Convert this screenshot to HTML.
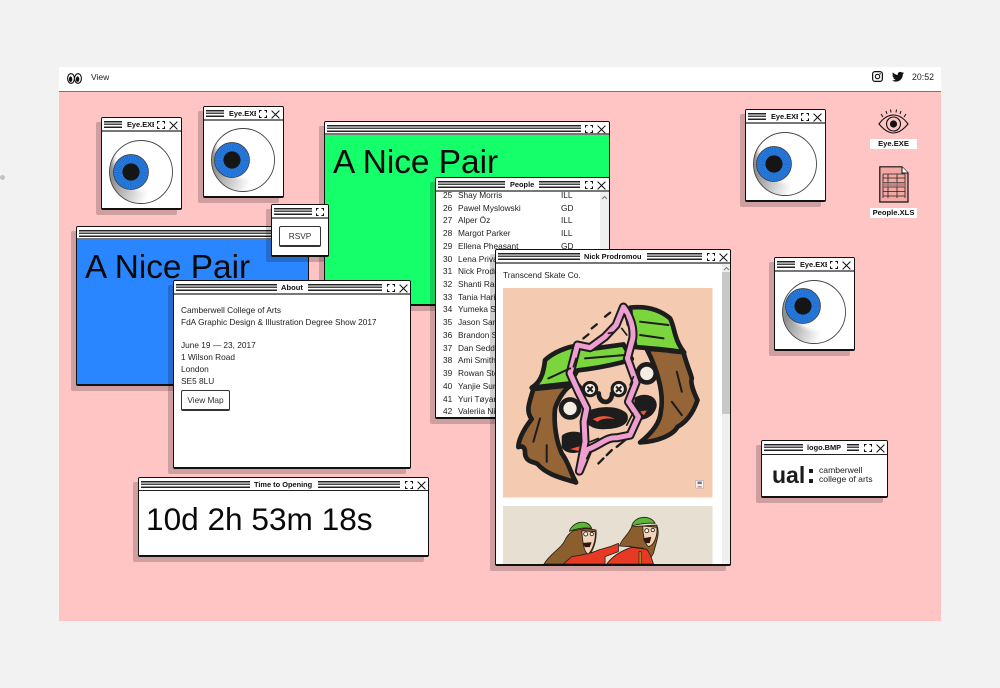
<!DOCTYPE html>
<html><head><meta charset="utf-8">
<style>
html,body{margin:0;padding:0;width:1000px;height:688px;overflow:hidden;background:#f2f2f2;font-family:"Liberation Sans",sans-serif;color:#111}
#dot{position:absolute;left:0;top:175px;width:5px;height:5px;border-radius:50%;background:#c4c4c4}
#screen{position:absolute;left:59px;top:67px;width:882px;height:554px;background:#ffc4c4;overflow:hidden}
#menu{position:absolute;left:0;top:0;width:882px;height:24px;background:#fff;border-bottom:1px solid #777}
.abs,.w,.l,.t,.fs,.x,.c{position:absolute}
.m{position:absolute;font-size:8.5px;top:5px;line-height:11px;color:#222}
.w{background:#fff;border:1px solid #111;border-bottom-width:2px;border-radius:2px;box-shadow:-5px 5px 0 rgba(0,0,0,.19);box-sizing:border-box;overflow:hidden;isolation:isolate}
.b{position:absolute;left:0;right:0;top:0;height:14px;background:#fff;border-bottom:2px solid #777;box-sizing:border-box;z-index:5}
.l{top:3px;height:7px;background:linear-gradient(#222 0,#222 1.5px,#fff 1.5px,#fff 2.7px,#444 2.7px,#444 4.2px,#fff 4.2px,#fff 5.4px,#222 5.4px,#222 7px)}
.t{top:1px;font-size:7.4px;font-weight:bold;line-height:12px;white-space:nowrap;overflow:hidden;color:#111}
.fs{top:3px;width:8px;height:8px}
.x{top:2.5px;width:9px;height:9px}
.c{left:0;right:0;top:14px;bottom:0}
.big{position:absolute;font-size:33.4px;line-height:38px;white-space:nowrap;color:#0a0a0a}
.txt{position:absolute;font-size:8.3px;line-height:11.8px;white-space:nowrap;color:#222}
.btn{position:absolute;background:#fff;border:1px solid #333;border-right-width:1.5px;border-bottom-width:2px;border-radius:2px;box-sizing:border-box;font-size:8.3px;text-align:center;color:#333}
.row{position:absolute;font-size:8.3px;line-height:12px;white-space:nowrap;color:#222}
.lab{position:absolute;background:#fff;font-size:7.6px;font-weight:bold;line-height:10px;height:10px;text-align:center;color:#111;white-space:nowrap}
svg{display:block;overflow:visible}
</style></head>
<body>
<svg width="0" height="0" style="position:absolute">
<defs>
<symbol id="ifs" viewBox="0 0 8 8"><path d="M.5 2.6V.5H2.6M5.4.5H7.5V2.6M7.500 5.400V7.500H5.400M2.600 7.500H.5V5.400" fill="none" stroke="#111" stroke-width="1.1"/></symbol>
<symbol id="ix" viewBox="0 0 9 9"><path d="M.6.6 8.4 8.4M8.4.6.6 8.4" fill="none" stroke="#111" stroke-width="1"/></symbol>
<linearGradient id="sh" x1=".05" y1=".6" x2=".62" y2=".85"><stop offset="0" stop-color="#8f8f8f"/><stop offset="1" stop-color="#fff"/></linearGradient>
<clipPath id="bc"><circle cx="32" cy="32" r="31.500"/></clipPath>
<filter id="bl" x="-20%" y="-20%" width="140%" height="140%"><feGaussianBlur stdDeviation="2"/></filter>
<symbol id="ball" viewBox="0 0 64 64" overflow="visible">
<circle cx="32" cy="32" r="31.500" fill="url(#sh)"/>
<g clip-path="url(#bc)"><circle cx="40" cy="16" r="36" fill="#fff" filter="url(#bl)"/></g>
<circle cx="32" cy="32" r="31.500" fill="none" stroke="#444" stroke-width=".9"/>
</symbol>
<symbol id="iris" viewBox="0 0 36 36">
<circle cx="18" cy="18" r="17.500" fill="#2a7de1" stroke="#333" stroke-width=".7"/>
<circle cx="18" cy="18" r="13" fill="none" stroke="#1a62bd" stroke-width="8" stroke-dasharray=".5 1.1"/>
<circle cx="18" cy="18" r="8.600" fill="#151515"/>
</symbol>
</defs>
</svg>
<div id="dot"></div>
<div id="screen">
<div id="menu">
<svg style="position:absolute;left:8px;top:6px" width="15" height="11" viewBox="0 0 15 11"><ellipse cx="4" cy="5.500" rx="3.400" ry="4.800" fill="#fff" stroke="#111" stroke-width="1.100"/><ellipse cx="11" cy="5.500" rx="3.400" ry="4.800" fill="#fff" stroke="#111" stroke-width="1.100"/><ellipse cx="3.600" cy="6.200" rx="1.700" ry="2.800" fill="#111"/><ellipse cx="10.600" cy="6.200" rx="1.700" ry="2.800" fill="#111"/></svg>
<div class="m" style="left:32px">View</div>
<svg style="position:absolute;left:813px;top:4px" width="11" height="11" viewBox="0 0 11 11"><rect x=".6" y=".6" width="9.800" height="9.800" rx="2.400" fill="none" stroke="#111" stroke-width="1.200"/><circle cx="5.500" cy="5.500" r="2.200" fill="none" stroke="#111" stroke-width="1.100"/><circle cx="8.200" cy="2.800" r=".7" fill="#111"/></svg>
<svg style="position:absolute;left:833px;top:5px" width="12" height="10" viewBox="0 0 24 20"><path transform="translate(0,-2.5)" d="M23.95 4.57a10 10 0 0 1-2.82.77 4.96 4.96 0 0 0 2.16-2.72c-.95.55-2 .96-3.12 1.18a4.92 4.92 0 0 0-8.38 4.48C7.69 8.1 4.07 6.13 1.64 3.16a4.82 4.82 0 0 0-.66 2.47c0 1.71.87 3.21 2.19 4.1a4.9 4.9 0 0 1-2.23-.61v.06c0 2.38 1.7 4.37 3.95 4.83a5 5 0 0 1-2.21.08 4.94 4.94 0 0 0 4.6 3.42 9.87 9.87 0 0 1-6.1 2.1c-.39 0-.78-.02-1.17-.07a14 14 0 0 0 7.56 2.21c9.05 0 14-7.5 14-13.98 0-.21 0-.42-.02-.63.96-.69 1.8-1.56 2.46-2.54z" fill="#111"/></svg>
<div class="m" style="left:853px;font-size:8.800px">20:52</div>
</div>

<!-- desktop icons -->
<svg style="position:absolute;left:819px;top:41px" width="31" height="26" viewBox="0 0 31 26"><path d="M1 16C6 9 11 7 15.500 7S25 9 30 16C25 22 20 25 15.500 25S6 22 1 16Z" fill="none" stroke="#111" stroke-width="1.100"/><circle cx="15.500" cy="16" r="7" fill="none" stroke="#111" stroke-width="1.100"/><circle cx="15.500" cy="16" r="3.600" fill="#111"/><path d="M5 9 3 6M9 6 8 3M13 4.500 12.500 1.500M18 4.500 18.500 1.500M22 6 23 3M26 9 28 6" stroke="#111" stroke-width="1" fill="none"/></svg>
<div class="lab" style="left:811px;top:72px;width:47px">Eye.EXE</div>
<svg style="position:absolute;left:820px;top:99px" width="30" height="37" viewBox="0 0 30 37"><path d="M.8.8H23L29 7V36H.8Z" fill="#f3a9a3" stroke="#111" stroke-width="1.200"/><path d="M23 .8V7H29" fill="#fff" stroke="#111"/><path d="M4 8H26M4 12H26M4 16.500H26M4 21H26M4 25.500H26M4 30H26M4 8V32M26 8V32M9 8V32M18 8V32" fill="none" stroke="#222" stroke-width=".8"/><path d="M4 16.500H26V21H4Z" fill="#a77" opacity=".7"/></svg>
<div class="lab" style="left:811px;top:141px;width:47px">People.XLS</div>

<!-- Blue -->
<div class="w" style="left:17px;top:159px;width:233px;height:160px;background:#2a86ff">
 <div class="b" style="height:13px"><div class="l" style="left:2px;width:200px"></div></div>
 <div class="big" style="left:8px;top:22px">A Nice Pair</div>
</div>
<!-- Green -->
<div class="w" style="left:265px;top:54px;width:286px;height:185px;background:#14ff6a">
 <div class="b" style="height:13px"><div class="l" style="left:2px;width:254px"></div>
  <svg class="fs" style="left:260px"><use href="#ifs" width="8" height="8"/></svg><svg class="x" style="left:272px"><use href="#ix" width="9" height="9"/></svg></div>
 <div class="big" style="left:8px;top:22px">A Nice Pair</div>
</div>

<!-- Eye 1 -->
<div class="w" style="left:42px;top:50px;width:81px;height:93px">
 <div class="b"><div class="l" style="left:2px;width:18px"></div><div class="t" style="left:25px;width:27px">Eye.EXE</div><svg class="fs" style="left:55px"><use href="#ifs" width="8" height="8"/></svg><svg class="x" style="left:67px"><use href="#ix" width="9" height="9"/></svg></div>
 <svg class="abs" style="left:7px;top:22px" width="64" height="64"><use href="#ball" width="64" height="64"/><use href="#iris" x="4" y="14" width="36" height="36"/></svg>
</div>
<!-- Eye 2 -->
<div class="w" style="left:144px;top:39px;width:81px;height:92px">
 <div class="b"><div class="l" style="left:2px;width:18px"></div><div class="t" style="left:25px;width:27px">Eye.EXE</div><svg class="fs" style="left:55px"><use href="#ifs" width="8" height="8"/></svg><svg class="x" style="left:67px"><use href="#ix" width="9" height="9"/></svg></div>
 <svg class="abs" style="left:7px;top:21px" width="64" height="64"><use href="#ball" width="64" height="64"/><use href="#iris" x="3" y="14" width="36" height="36"/></svg>
</div>
<!-- Eye 3 -->
<div class="w" style="left:686px;top:42px;width:81px;height:93px">
 <div class="b"><div class="l" style="left:2px;width:18px"></div><div class="t" style="left:25px;width:27px">Eye.EXE</div><svg class="fs" style="left:55px"><use href="#ifs" width="8" height="8"/></svg><svg class="x" style="left:67px"><use href="#ix" width="9" height="9"/></svg></div>
 <svg class="abs" style="left:7px;top:22px" width="64" height="64"><use href="#ball" width="64" height="64"/><use href="#iris" x="3" y="14" width="36" height="36"/></svg>
</div>
<!-- Eye 4 -->
<div class="w" style="left:715px;top:190px;width:81px;height:94px">
 <div class="b"><div class="l" style="left:2px;width:18px"></div><div class="t" style="left:25px;width:27px">Eye.EXE</div><svg class="fs" style="left:55px"><use href="#ifs" width="8" height="8"/></svg><svg class="x" style="left:67px"><use href="#ix" width="9" height="9"/></svg></div>
 <svg class="abs" style="left:7px;top:22px" width="64" height="64"><use href="#ball" width="64" height="64"/><use href="#iris" x="3" y="8" width="36" height="36"/></svg>
</div>

<!-- RSVP -->
<div class="w" style="left:212px;top:137px;width:58px;height:53px">
 <div class="b"><div class="l" style="left:2px;width:38px"></div><svg class="fs" style="left:44px"><use href="#ifs" width="8" height="8"/></svg></div>
 <div class="btn" style="left:7px;top:21px;width:42px;height:21px;line-height:18px">RSVP</div>
</div>

<!-- About -->
<div class="w" style="left:114px;top:213px;width:238px;height:189px">
 <div class="b"><div class="l" style="left:2px;width:101px"></div><div class="t" style="left:107px;width:24px;font-size:7.600px">About</div><div class="l" style="left:134px;width:74px"></div><svg class="fs" style="left:213px"><use href="#ifs" width="8" height="8"/></svg><svg class="x" style="left:225px"><use href="#ix" width="9" height="9"/></svg></div>
 <div class="txt" style="left:7px;top:24px">Camberwell College of Arts<br>FdA Graphic Design &amp; Illustration Degree Show 2017<br><br>June 19 — 23, 2017<br>1 Wilson Road<br>London<br>SE5 8LU</div>
 <div class="btn" style="left:7px;top:109px;width:49px;height:21px;line-height:18px">View Map</div>
</div>

<!-- Timer -->
<div class="w" style="left:79px;top:410px;width:291px;height:80px">
 <div class="b" style="height:13px;border-bottom:1px solid #222"><div class="l" style="left:2px;width:109px"></div><div class="t" style="left:115px;width:60px">Time to Opening</div><div class="l" style="left:179px;width:82px"></div><svg class="fs" style="left:266px"><use href="#ifs" width="8" height="8"/></svg><svg class="x" style="left:278px"><use href="#ix" width="9" height="9"/></svg></div>
 <div class="big" style="left:7px;top:22px;font-size:31.600px">10d 2h 53m 18s</div>
</div>

<!-- Logo -->
<div class="w" style="left:702px;top:373px;width:127px;height:58px">
 <div class="b" style="border-bottom:1px solid #222"><div class="l" style="left:2px;width:39px"></div><div class="t" style="left:45px;width:35px">logo.BMP</div><div class="l" style="left:85px;width:12px"></div><svg class="fs" style="left:102px"><use href="#ifs" width="8" height="8"/></svg><svg class="x" style="left:114px"><use href="#ix" width="9" height="9"/></svg></div>
 <div class="abs" style="left:10px;top:19px;font-size:23px;font-weight:bold;line-height:30px;color:#1c1c1c">ual</div>
 <div class="abs" style="left:47px;top:28px;width:4px;height:4px;background:#1c1c1c"></div>
 <div class="abs" style="left:47px;top:38px;width:4px;height:4px;background:#1c1c1c"></div>
 <div class="abs" style="left:57px;top:25px;font-size:8.600px;line-height:8.500px;color:#1c1c1c;white-space:nowrap">camberwell<br>college of arts</div>
</div>

<!-- People -->
<div class="w" style="left:376px;top:110px;width:175px;height:242px">
 <div class="b"><div class="l" style="left:2px;width:67px"></div><div class="t" style="left:74px;width:26px">People</div><div class="l" style="left:103px;width:41px"></div><svg class="fs" style="left:149px"><use href="#ifs" width="8" height="8"/></svg><svg class="x" style="left:161px"><use href="#ix" width="9" height="9"/></svg></div>
 <div class="abs" style="left:164px;top:14px;width:9px;bottom:0;background:#efefef"><svg style="position:absolute;left:1px;top:3px" width="7" height="5" viewBox="0 0 7 5"><path d="M1 4 3.500 1.500 6 4" fill="none" stroke="#777"/></svg></div>
 <div class="row" style="left:7px;top:11px;line-height:12.720px">25<br>26<br>27<br>28<br>29<br>30<br>31<br>32<br>33<br>34<br>35<br>36<br>37<br>38<br>39<br>40<br>41<br>42</div>
 <div class="row" style="left:22px;top:11px;line-height:12.720px">Shay Morris<br>Pawel Myslowski<br>Alper Öz<br>Margot Parker<br>Ellena Pheasant<br>Lena Privat<br>Nick Prodromou<br>Shanti Rai<br>Tania Hari<br>Yumeka Sato<br>Jason Sand<br>Brandon Sim<br>Dan Seddon<br>Ami Smith<br>Rowan Stev<br>Yanjie Sun<br>Yuri Tøyama<br>Valeriia Nik</div>
 <div class="row" style="left:125px;top:11px;line-height:12.720px">ILL<br>GD<br>ILL<br>ILL<br>GD</div>
</div>

<!-- Nick -->
<div class="w" style="left:436px;top:182px;width:236px;height:317px">
 <div class="b"><div class="l" style="left:2px;width:82px"></div><div class="t" style="left:88px;width:60px;font-size:7.400px">Nick Prodromou</div><div class="l" style="left:151px;width:55px"></div><svg class="fs" style="left:211px"><use href="#ifs" width="8" height="8"/></svg><svg class="x" style="left:223px"><use href="#ix" width="9" height="9"/></svg></div>
 <div class="abs" style="left:226px;top:14px;width:9px;bottom:0;background:#efefef"><div class="abs" style="left:0;right:0;top:8px;height:142px;background:#c8c8c8"></div><svg style="position:absolute;left:1px;top:2px" width="7" height="5" viewBox="0 0 7 5"><path d="M1 4 3.500 1.500 6 4" fill="none" stroke="#777"/></svg></div>
 <div class="txt" style="left:7px;top:20px">Transcend Skate Co.</div>
 <svg class="abs" style="left:7px;top:38px" width="209.500" height="209.500" viewBox="39 129 628 628">
  <rect x="39" y="129" width="628" height="628" fill="#f4cbb0"/>
  <g stroke="#1d1d1d" stroke-width="14" stroke-linejoin="round" stroke-linecap="round">
   <path d="M130 432C115 480 108 500 125 522C95 560 85 590 85 606C100 600 105 610 105 622C105 650 130 650 142 656C170 690 220 700 258 712C240 680 235 650 215 625C200 590 190 540 195 490C205 460 225 430 245 420Z" fill="#956437"/>
   <path d="M470 312C510 312 560 320 580 322C590 360 600 380 605 400C600 412 610 440 622 465C610 500 590 530 562 545C550 570 500 590 450 592C490 560 510 530 512 500C522 450 505 380 470 312Z" fill="#956437"/>
   <path d="M125 428C150 412 160 390 165 345C190 322 230 305 270 300L300 312L400 298L425 342L395 352C340 366 300 372 262 376L240 415Z" fill="#7ad63c"/>
   <path d="M420 188C470 182 510 195 540 220C555 250 550 280 582 322C540 314 480 310 436 306L425 250Z" fill="#7ad63c"/>
   <circle cx="470" cy="385" r="27" fill="#f3ede3"/>
   <circle cx="240" cy="490" r="27" fill="#f3ede3"/>
   <path d="M440 462C470 448 498 462 492 485C485 508 460 522 440 515Z" fill="#1d1d1d"/>
   <path d="M222 575C245 558 288 568 288 590C288 614 240 628 222 605Z" fill="#1d1d1d"/>
   <path d="M326 445C326 478 365 480 366 445" fill="none"/>
   <path d="M290 510C310 490 380 485 405 510C412 530 390 545 345 545C310 548 285 530 290 510Z" fill="#1d1d1d"/>
  </g>
  <circle cx="300" cy="432" r="20" fill="#f3ede3" stroke="#1d1d1d" stroke-width="9"/>
  <circle cx="386" cy="432" r="20" fill="#f3ede3" stroke="#1d1d1d" stroke-width="9"/>
  <path d="M292 424 308 440M308 424 292 440M378 424 394 440M394 424 378 440" stroke="#1d1d1d" stroke-width="6"/>
  <path d="M308 522C330 510 355 510 375 522C350 518 335 520 322 530Z" fill="#f0553a"/>
  <path d="M445 500 470 496 462 510Z" fill="#f0553a"/>
  <path d="M240 612 270 603 268 618Z" fill="#f0553a"/>
  <path d="M400 186C418 210 432 245 428 280L412 340L438 412L415 470L445 515L420 570L380 578C350 575 330 600 295 612L268 678L285 590L282 530L290 490L265 440L240 385L262 300L300 308L345 275L378 240Z" fill="none" stroke="#1d1d1d" stroke-width="27" stroke-linejoin="round"/>
  <path d="M400 186C418 210 432 245 428 280L412 340L438 412L415 470L445 515L420 570L380 578C350 575 330 600 295 612L268 678L285 590L282 530L290 490L265 440L240 385L262 300L300 308L345 275L378 240Z" fill="none" stroke="#ef9ed0" stroke-width="15" stroke-linejoin="round"/>
  <path d="M405 210 412 240M395 250 410 270M355 265 370 262M258 340 250 365M262 410 278 430M430 395 420 420M428 505 410 540M300 590 325 580M290 640 300 620" stroke="#1d1d1d" stroke-width="5" stroke-linecap="round"/>
  <path d="M280 280 295 268M305 250 320 238M345 215 360 203M325 655 340 640M350 630 365 615M380 605 405 585" stroke="#1d1d1d" stroke-width="7" stroke-linecap="round"/>
  <path d="M175 400 240 370M450 230 535 240M450 270 520 280M285 340 405 330M150 520 130 590M170 600 170 650M560 380 575 440M545 470 575 510" stroke="#1d1d1d" stroke-width="6" stroke-linecap="round"/>
  <rect x="617" y="706" width="23" height="23" fill="#fff" stroke="#aaa" stroke-width="2"/><rect x="622" y="709" width="13" height="8" fill="#777"/><rect x="622" y="722" width="13" height="5" fill="#d88"/>
 </svg>
 <svg class="abs" style="left:7px;top:256px" width="209.500" height="58" viewBox="39 48 628 174" preserveAspectRatio="none">
  <rect x="39" y="48" width="628" height="174" fill="#e6dfd2"/>
  <g stroke="#2a1d12" stroke-width="2.500" stroke-linejoin="round">
   <path d="M162 222C180 190 215 175 225 150C235 130 245 125 250 122L290 115L318 120C320 150 312 175 298 195L270 200L250 222Z" fill="#8b5e2e"/>
   <path d="M220 222 245 200C275 195 305 190 325 180L360 170 385 160 385 185 345 200 345 222Z" fill="#e63a24"/>
   <path d="M275 122 315 125C318 140 312 175 295 192C282 190 278 160 275 122Z" fill="#f2d4b8"/>
   <path d="M238 124C245 98 290 82 305 115C285 112 260 115 238 124Z" fill="#59b83a"/>
   <path d="M280 160 303 158 298 170 285 170Z" fill="#3b1010"/>
   <circle cx="287" cy="132" r="6" fill="#fff"/><circle cx="305" cy="132" r="5" fill="#fff"/>
   <path d="M388 168C395 145 415 135 425 110L500 105C510 130 500 150 490 190L475 215L460 175L420 170Z" fill="#8b5e2e"/>
   <path d="M350 222C370 195 400 180 425 172L470 178C480 190 485 205 490 222Z" fill="#e63a24"/>
   <path d="M458 108 500 112C503 130 495 165 475 170C462 160 458 130 458 108Z" fill="#f2d4b8"/>
   <path d="M425 108C432 78 480 72 495 100C470 98 445 102 425 108Z" fill="#59b83a"/>
   <path d="M460 146 482 142 478 158 466 158Z" fill="#3b1010"/>
   <circle cx="470" cy="122" r="6" fill="#fff"/><circle cx="488" cy="120" r="5" fill="#fff"/>
   <rect x="447" y="185" width="6" height="37" fill="#e0b83a"/>
  </g>
 </svg>
</div>
</div>
</body></html>
